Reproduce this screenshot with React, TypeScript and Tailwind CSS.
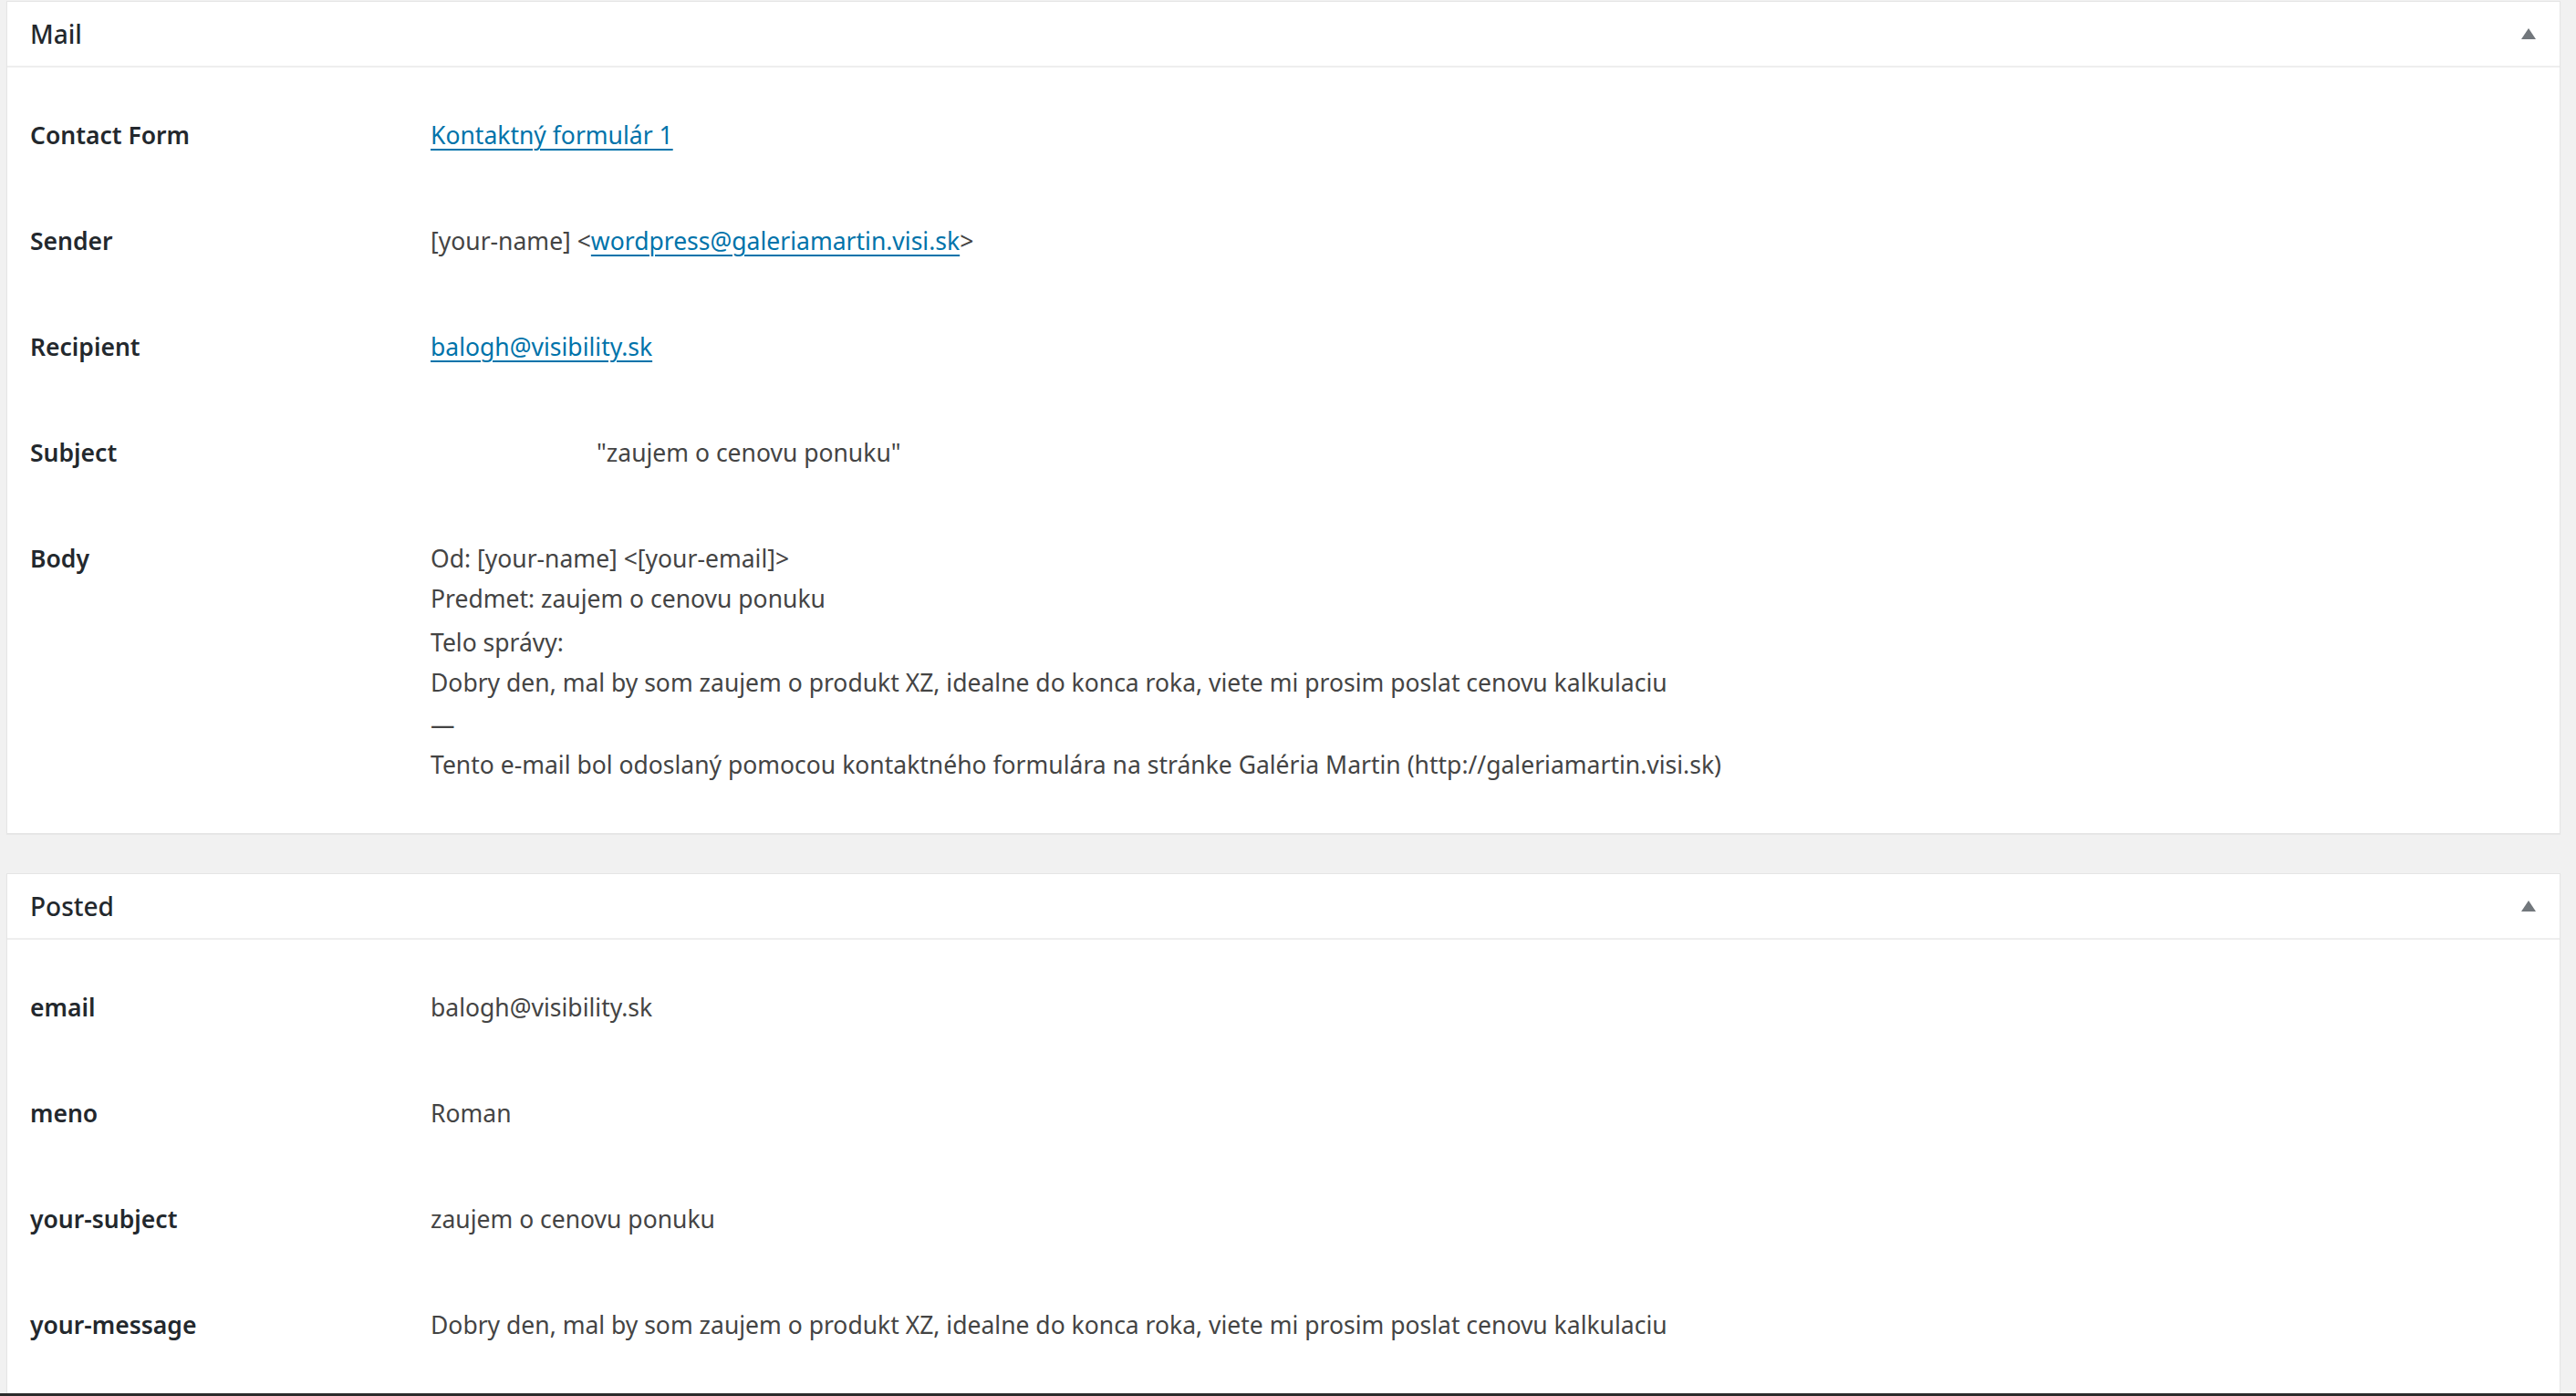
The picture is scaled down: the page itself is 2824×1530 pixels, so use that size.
import React from "react";

const font = { fontFamily: '"Noto Sans", "Open Sans", sans-serif' };

function Toggle() {
  return (
    <svg width="16" height="12" viewBox="0 0 16 12" className="shrink-0">
      <path d="M8 0 L16 12 L0 12 Z" fill="#72777c" />
    </svg>
  );
}

function Link({ children }: { children: React.ReactNode }) {
  return <a className="text-[#0073aa] underline underline-offset-[5px] decoration-[2px]">{children}</a>;
}

function Row({ label, children }: { label: string; children: React.ReactNode }) {
  return (
    <div className="flex py-[36px] leading-[44px]">
      <div className="w-[439px] shrink-0 font-semibold text-[#23282d]">{label}</div>
      <div className="flex-1 text-[#444]">{children}</div>
    </div>
  );
}

function Panel({ title, children }: { title: string; children: React.ReactNode }) {
  return (
    <section className="bg-white border border-[#e5e5e5] shadow-[0_1px_1px_rgba(0,0,0,0.04)]">
      <header className="h-[72px] flex items-center justify-between pl-[25px] pr-[26px] border-b-2 border-[#eeeeee]">
        <h2 className="text-[28px] font-medium text-[#23282d]">{title}</h2>
        <Toggle />
      </header>
      <div className="pl-[25px] pt-[16px] pb-[17px] text-[26.5px]">{children}</div>
    </section>
  );
}

export default function App() {
  return (
    <div className="w-[2824px] h-[1530px] bg-[#f1f1f1] overflow-hidden flex flex-col" style={font}>
      <div className="flex-1 min-h-0 pt-[1px] pl-[7px] pr-[17px]">
        <Panel title="Mail">
          <Row label="Contact Form">
            <Link>Kontaktný formulár 1</Link>
          </Row>
          <Row label="Sender">
            [your-name] &lt;<Link>wordpress@galeriamartin.visi.sk</Link>&gt;
          </Row>
          <Row label="Recipient">
            <Link>balogh@visibility.sk</Link>
          </Row>
          <Row label="Subject">
            <span className="pl-[182px]">"zaujem o cenovu ponuku"</span>
          </Row>
          <div className="flex pt-[36px] pb-[36px] leading-[44px]">
            <div className="w-[439px] shrink-0 font-semibold text-[#23282d]">Body</div>
            <div className="flex-1 text-[#444]">
              <div>Od: [your-name] &lt;[your-email]&gt;</div>
              <div>Predmet: zaujem o cenovu ponuku</div>
              <div className="mt-[4px]">Telo správy:</div>
              <div>Dobry den, mal by som zaujem o produkt XZ, idealne do konca roka, viete mi prosim poslat cenovu kalkulaciu</div>
              <div className="mt-[2px]">—</div>
              <div>Tento e-mail bol odoslaný pomocou kontaktného formulára na stránke Galéria Martin (http://galeriamartin.visi.sk)</div>
            </div>
          </div>
        </Panel>
        <div className="h-[43px]" />
        <Panel title="Posted">
          <Row label="email">balogh@visibility.sk</Row>
          <Row label="meno">Roman</Row>
          <Row label="your-subject">zaujem o cenovu ponuku</Row>
          <Row label="your-message">
            Dobry den, mal by som zaujem o produkt XZ, idealne do konca roka, viete mi prosim poslat cenovu kalkulaciu
          </Row>
        </Panel>
      </div>
      <div className="h-[3px] bg-[#2b2b2b] shrink-0" />
    </div>
  );
}
